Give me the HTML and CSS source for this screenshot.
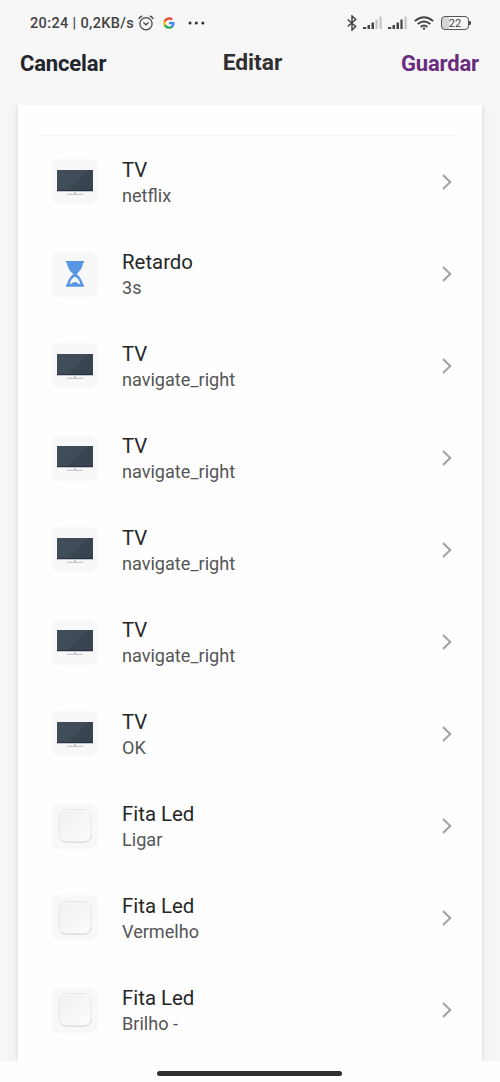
FILE: index.html
```html
<!DOCTYPE html>
<html lang="pt">
<head>
<meta charset="utf-8">
<title>Editar</title>
<link rel="stylesheet" href="styles.css">
</head>
<body>
<svg class="defs" aria-hidden="true">
  <defs>
    <linearGradient id="key" x1="0" y1="0" x2="1" y2="1"><stop offset="0" stop-color="#f1f1f1"/><stop offset=".55" stop-color="#f6f6f6"/><stop offset="1" stop-color="#fdfdfd"/></linearGradient>
    <symbol id="tv" viewBox="0 0 46 46">
      <path fill="#394452" d="M5 11h36v21H5z"/>
      <path fill="#414c59" d="M5 11h31l-21 21H5z"/>
      <path fill="#252d38" d="M5 31.200h36v1H5z"/>
      <path fill="#c9cacc" d="M22 32.200h2v2.800h-2zM15 34.700h16v1.200H15z"/>
    </symbol>
    <symbol id="hourglass" viewBox="0 0 46 46">
      <path fill="#5896e3" fill-rule="evenodd" d="M14 10h18v2h-1c-.5 5-3 8-6.300 11 3.300 3 5.800 6.500 6.300 10.500h1v2.300H14v-2.300h1c.5-4 3-7.500 6.300-10.500-3.300-3-5.800-6-6.300-11h-1zM23 25.500c-3 2-4.900 4.300-5.300 7.800 2.400-.4 3-2.300 5.300-2.300s2.900 1.900 5.300 2.300c-.4-3.500-2.300-5.800-5.300-7.800z"/>
    </symbol>
    <symbol id="switch" viewBox="0 0 46 46">
      <rect x="7" y="6.500" width="32" height="33" rx="7.500" fill="#fafafa" stroke="#e4e4e4"/>
      <rect x="8" y="8" width="30" height="30" rx="6.500" fill="url(#key)"/>
      <path d="M9 36.500q1.800 2.500 5 2.500h18q6 0 7-6" fill="none" stroke="#d6d6d6"/>
    </symbol>
    <symbol id="chevron" viewBox="0 0 12 18"><path d="M2 2l7.300 7L2 16" fill="none" stroke="#a0a0a0" stroke-width="1.900"/></symbol>
    <symbol id="signal" viewBox="0 0 20 14">
      <path fill="#444" d="M0 11h3.200v2H0zM4.500 9h2.500v4H4.500zM8.500 6.500h2.500V13H8.500z"/>
    </symbol>
  </defs>
</svg>
<div class="screen">
  <div class="status">
    <span class="clock">20:24 | 0,2KB/s</span>
    <svg class="alarm" viewBox="0 0 16 16" fill="none" stroke="#484848" stroke-width="1.300"><circle cx="8" cy="8.700" r="6.100"/><path d="M.7 4Q1.700 1.700 4.200 1M15.300 4Q14.300 1.700 11.800 1M5.400 7.500L8 9.800l2.600-2.300"/></svg>
    <svg class="google" viewBox="0 0 24 24">
      <path fill="#4285f4" d="M23 12.300c0-.8-.1-1.500-.2-2.200H12v4.400h6.200a5.300 5.300 0 0 1-2.300 3.500v3h3.700c2.200-2 3.400-5 3.400-8.700z"/>
      <path fill="#34a853" d="M12 23.500c3.100 0 5.700-1 7.600-2.500l-3.700-3A7 7 0 0 1 5.500 14.400H1.700v3A11.500 11.500 0 0 0 12 23.500z"/>
      <path fill="#fbbc05" d="M5.500 14.400a7 7 0 0 1 0-4.400V7H1.700a11.500 11.500 0 0 0 0 10.400z"/>
      <path fill="#ea4335" d="M12 5.100c1.700 0 3.200.6 4.400 1.700l3.300-3.300A11.500 11.500 0 0 0 1.700 7l3.800 3A6.900 6.900 0 0 1 12 5.100z"/>
    </svg>
    <svg class="dots" viewBox="0 0 18 4" fill="#303030"><circle cx="2" cy="2" r="1.500"/><circle cx="8.300" cy="2" r="1.500"/><circle cx="14.800" cy="2" r="1.500"/></svg>
    <svg class="bluetooth" viewBox="0 0 10 16" fill="none" stroke="#444" stroke-width="1.500"><path d="M.7 4.500l8 7L5 15V1l3.700 3.500-8 7"/></svg>
    <svg class="signal" viewBox="0 0 20 14"><use href="#signal"/><path fill="#c4c4c4" d="M12.400 3.500h2.200V13h-2.200zM16.500.5h2.200V13h-2.200z"/></svg>
    <svg class="signal second" viewBox="0 0 20 14"><use href="#signal"/><path fill="#444" d="M12.400 3.500h2.200V13h-2.200z"/><path fill="#c4c4c4" d="M16.500.5h2.200V13h-2.200z"/></svg>
    <svg class="wifi" viewBox="0 0 20 14" fill="none" stroke="#444" stroke-width="1.900"><path d="M.8 5.100q9.200-7.800 18.400 0M3.700 8.100q6.300-5.200 12.600 0M6.600 10.900q3.400-2.700 6.800 0"/><circle cx="10" cy="12.600" r="1.200" fill="#444" stroke="none"/></svg>
    <span class="battery">22</span>
  </div>
  <header class="nav">
    <span class="cancel">Cancelar</span><span class="heading">Editar</span><span class="save">Guardar</span>
  </header>
  <div class="viewport">
    <main class="card">
      <div class="rule"></div>
      <div class="row"><svg class="thumb"><use href="#tv"/></svg><div class="label"><div class="name">TV</div><div class="action">netflix</div></div><svg class="chevron"><use href="#chevron"/></svg></div>
      <div class="row"><svg class="thumb"><use href="#hourglass"/></svg><div class="label"><div class="name">Retardo</div><div class="action">3s</div></div><svg class="chevron"><use href="#chevron"/></svg></div>
      <div class="row"><svg class="thumb"><use href="#tv"/></svg><div class="label"><div class="name">TV</div><div class="action">navigate_right</div></div><svg class="chevron"><use href="#chevron"/></svg></div>
      <div class="row"><svg class="thumb"><use href="#tv"/></svg><div class="label"><div class="name">TV</div><div class="action">navigate_right</div></div><svg class="chevron"><use href="#chevron"/></svg></div>
      <div class="row"><svg class="thumb"><use href="#tv"/></svg><div class="label"><div class="name">TV</div><div class="action">navigate_right</div></div><svg class="chevron"><use href="#chevron"/></svg></div>
      <div class="row"><svg class="thumb"><use href="#tv"/></svg><div class="label"><div class="name">TV</div><div class="action">navigate_right</div></div><svg class="chevron"><use href="#chevron"/></svg></div>
      <div class="row"><svg class="thumb"><use href="#tv"/></svg><div class="label"><div class="name">TV</div><div class="action">OK</div></div><svg class="chevron"><use href="#chevron"/></svg></div>
      <div class="row"><svg class="thumb"><use href="#switch"/></svg><div class="label"><div class="name">Fita Led</div><div class="action">Ligar</div></div><svg class="chevron"><use href="#chevron"/></svg></div>
      <div class="row"><svg class="thumb"><use href="#switch"/></svg><div class="label"><div class="name">Fita Led</div><div class="action">Vermelho</div></div><svg class="chevron"><use href="#chevron"/></svg></div>
      <div class="row"><svg class="thumb"><use href="#switch"/></svg><div class="label"><div class="name">Fita Led</div><div class="action">Brilho -</div></div><svg class="chevron"><use href="#chevron"/></svg></div>
    </main>
  </div>
  <div class="gesture"><div class="handle"></div></div>
</div>
</body>
</html>
```
FILE: styles.css
```css
* { box-sizing: border-box; }
body { margin: 0; font-family: Roboto, sans-serif; background: #fefefe; }
svg { display: block; flex: none; }
.defs { position: absolute; width: 0; height: 0; }
.screen { width: 500px; height: 1082px; display: flex; flex-direction: column; overflow: hidden; }
.status { height: 46px; background: #f7f7f7; display: flex; align-items: center; padding: 0 31px 0 30px; flex: none; }
.clock { width: 108px; white-space: nowrap; font-size: 14.5px; font-weight: 500; letter-spacing: .36px; color: #444; line-height: 20px; padding-top: 1px; }
.alarm { width: 16px; height: 16px; }
.google { width: 12px; height: 12px; margin-left: 9px; }
.dots { width: 18px; height: 4px; margin-left: 13px; }
.bluetooth { width: 10px; height: 16px; margin-left: auto; }
.signal { width: 20px; height: 14px; margin-left: 6px; }
.second { margin-left: 5px; }
.wifi { width: 20px; height: 14px; margin-left: 6px; }
.battery { position: relative; width: 28px; height: 14px; margin-left: 7px; border: 1.5px solid #555; border-radius: 4px; background: linear-gradient(90deg, #d5d5d5 25%, #f7f7f7 25%); font-size: 11px; line-height: 13px; text-align: center; color: #444; }
.battery::after { content: ""; position: absolute; left: 27px; top: 4px; width: 2px; height: 4px; border-radius: 0 1px 1px 0; background: #505050; }
.nav { height: 59px; flex: none; background: #f7f7f7; display: grid; grid-template-columns: 1fr auto 1fr; padding: 3px 21px 0 20px; font-size: 22px; line-height: 29px; font-weight: 700; letter-spacing: -.15px; color: #22252b; }
.heading { color: #303030; font-size: 22.8px; line-height: 28px; letter-spacing: 0; padding-left: 6px; }
.save { color: #6a2c7c; text-align: right; }
.viewport { height: 956px; flex: none; overflow: hidden; background: #f6f6f6; padding: 0 18px; }
.card { height: 956px; background: #fefefe; box-shadow: 0 0 4px #d6d6d6, 0 0 12px #ececec; padding: 30px 22px 0; }
.rule { height: 1px; background: #f5f5f5; }
.row { height: 92px; display: flex; align-items: center; padding: 0 7px 0 12px; }
.thumb { width: 46px; height: 46px; border-radius: 8px; background: #f8f8f8; }
.label { margin-left: 24px; flex: 1; padding-top: 2px; }
.name { font-size: 20.4px; line-height: 26px; color: #262626; }
.action { font-size: 18.1px; line-height: 26px; color: #555; }
.chevron { width: 12px; height: 18px; }
.gesture { height: 21px; display: flex; justify-content: center; padding: 10px 1px 0 0; }
.handle { width: 185px; height: 5px; border-radius: 3px; background: #303030; }
```
